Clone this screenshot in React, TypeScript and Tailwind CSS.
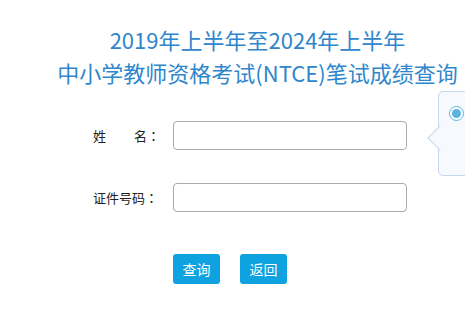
import React from 'react';

const font = { fontFamily: '"Microsoft YaHei", "Noto Sans CJK SC", sans-serif' };
const colonFont = { fontFamily: '"Noto Sans CJK TC", sans-serif' };

const App = () => {
  return (
    <div className="relative w-full h-[318px] overflow-hidden bg-white" style={font}>
      <div className="pl-[50px] pt-[23px] text-center text-[22px] leading-[33px] text-[#2f86cc]">
        <div>2019年上半年至2024年上半年</div>
        <div>中小学教师资格考试(NTCE)笔试成绩查询</div>
      </div>

      <div className="mt-[32px] pl-[93px] flex flex-col gap-[33px]">
        <div className="flex items-center">
          <span className="w-[67px] flex justify-between text-[13px] text-[#222]">
            <span>姓</span>
            <span>
              名<span style={colonFont}>：</span>
            </span>
          </span>
          <input className="ml-[13px] w-[234px] h-[29px] border border-[#aaaaaa] rounded-[4px] px-2 text-[13px] outline-none" />
        </div>
        <div className="flex items-center">
          <span className="w-[67px] text-[13px] text-[#222]">
            证件号码<span style={colonFont}>：</span>
          </span>
          <input className="ml-[13px] w-[234px] h-[29px] border border-[#aaaaaa] rounded-[4px] px-2 text-[13px] outline-none" />
        </div>
      </div>

      <div className="mt-[42px] pl-[173px] flex gap-[20px]">
        <button className="w-[47px] h-[30px] rounded-[3px] bg-[#0ea2e0] text-white text-[14px]">查询</button>
        <button className="w-[47px] h-[30px] rounded-[3px] bg-[#0ea2e0] text-white text-[14px]">返回</button>
      </div>

      {/* side popover */}
      <div className="absolute left-[438px] top-[91px] w-[60px] h-[85px] rounded-[5px] border border-[#c6d8ef] bg-[#f6faff]">
        <div className="absolute left-[-8px] top-[37px] w-[18px] h-[18px] rotate-45 border-l border-b border-[#c6d8ef] bg-[#f6faff]" />
        <div className="absolute left-[10px] top-[14px] w-[15px] h-[15px] rounded-full border-[1.5px] border-[#5bb3de] bg-white flex items-center justify-center">
          <div className="w-[9px] h-[9px] rounded-full bg-[#5bb3de]" />
        </div>
      </div>
    </div>
  );
};

export default App;
